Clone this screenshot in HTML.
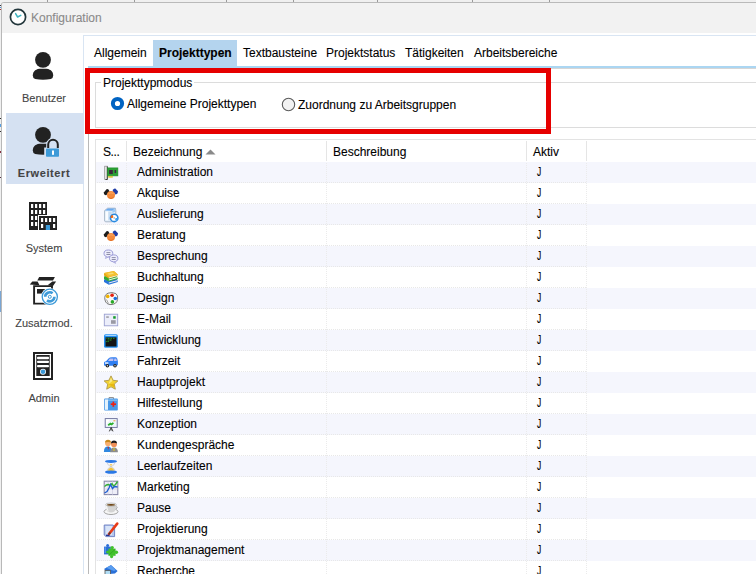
<!DOCTYPE html>
<html><head><meta charset="utf-8">
<style>
*{margin:0;padding:0;box-sizing:border-box}
html,body{width:756px;height:574px;overflow:hidden;background:#f0f0f0;font-family:"Liberation Sans",sans-serif;font-size:12px;color:#000}
.a,.cell,.j{-webkit-text-stroke:0.1px currentColor}
.a{position:absolute;white-space:nowrap}
.t12{font-size:12px;line-height:14px}
.t11{font-size:11px;line-height:13px}
#win{position:absolute;left:1px;top:2px;width:800px;height:600px;background:#fff;border-left:1px solid #b8b8b8;border-top:1px solid #bababa;border-top-left-radius:3px;overflow:hidden}
#title{position:absolute;left:0;top:0;width:800px;height:30px;background:#f2f2f2}
.lbl{color:#444;text-align:center;width:80px;left:4px}
.row{position:absolute;left:96px;width:700px;height:21px}
.row.odd{background:#f5f6fd}
.dot{position:absolute;left:96px;width:491px;height:1px;background-image:linear-gradient(to right,transparent 50%,#e8e8e8 50%);background-size:2px 1px}
.vdot{position:absolute;width:1px;top:162px;height:420px;background-image:linear-gradient(to bottom,transparent 50%,#ebebeb 50%);background-size:1px 2px}
.hsep{position:absolute;top:141px;width:1px;height:20px;background:#e5e5e5}
.cell{position:absolute;left:137px;font-size:12px;line-height:14px;white-space:nowrap}
.j{position:absolute;left:537px;font-size:12px;line-height:14px;transform:scaleX(0.7);transform-origin:0 0;-webkit-text-stroke:0.15px #000}
.ic{position:absolute;left:103px;width:16px;height:16px}
</style></head><body>
<!-- background window bits -->
<div class="a" style="left:47px;top:0;width:1px;height:2px;background:#9a9a9a"></div>
<div class="a" style="left:134px;top:0;width:1px;height:2px;background:#9a9a9a"></div>
<div class="a" style="left:226px;top:0;width:1px;height:2px;background:#9a9a9a"></div>
<div class="a" style="left:293px;top:0;width:1px;height:2px;background:#9a9a9a"></div>
<div class="a" style="left:377px;top:0;width:1px;height:2px;background:#9a9a9a"></div>
<div class="a" style="left:472px;top:0;width:1px;height:2px;background:#9a9a9a"></div>
<div class="a" style="left:549px;top:0;width:1px;height:2px;background:#9a9a9a"></div>

<div class="a" style="left:0;top:291px;width:1px;height:21px;background:#7aa6d4"></div>
<div class="a" style="left:0;top:5px;width:2px;height:1px;background:#334"></div>
<div class="a" style="left:0;top:7px;width:2px;height:1px;background:#4a90d0"></div>
<div class="a" style="left:0;top:9px;width:2px;height:1px;background:#a33"></div>
<div class="a" style="left:0;top:118px;width:1px;height:1px;background:#333"></div>
<div class="a" style="left:0;top:124px;width:1px;height:3px;background:#5aa0e0"></div>
<div class="a" style="left:0;top:131px;width:1px;height:1px;background:#333"></div>
<div class="a" style="left:0;top:151px;width:1px;height:2px;background:#834"></div>
<div class="a" style="left:0;top:177px;width:1px;height:1px;background:#534"></div>
<div id="win">
 <div id="title"></div>
</div>

<!-- title -->
<svg class="a" style="left:9px;top:8px" width="18" height="18" viewBox="0 0 18 18">
 <circle cx="9" cy="9" r="7.6" fill="#fff" stroke="#22363b" stroke-width="1.7"/>
 <path d="M6.6 5.6 L8.6 9 L11.8 7.4" fill="none" stroke="#3fb3c0" stroke-width="1.5" stroke-linecap="round" stroke-linejoin="round"/>
</svg>
<div class="a t12" style="left:31px;top:11px;color:#8a8a8a">Konfiguration</div>

<!-- sidebar -->
<div class="a" style="left:83px;top:35px;width:700px;height:600px;border-left:1px solid #d9e5f3;border-top:1px solid #d9e5f3"></div>

<div class="a" style="left:6px;top:113px;width:78px;height:71px;background:#d5e1f2"></div>
<!-- Benutzer icon -->
<svg class="a" style="left:31px;top:50px" width="24" height="32" viewBox="0 0 24 32">
 <circle cx="12" cy="9.8" r="7.9" fill="#222"/>
 <path d="M8.5 18.7 H15.5 C20.5 19.3 22.2 22.5 22.2 25.5 Q22.2 28.3 19.8 29 Q12 30.6 4.2 29 Q1.8 28.3 1.8 25.5 C1.8 22.5 3.5 19.3 8.5 18.7 Z" fill="#222"/>
</svg>
<div class="a t11 lbl" style="top:92px">Benutzer</div>

<!-- Erweitert icon -->
<svg class="a" style="left:31px;top:125px" width="32" height="34" viewBox="0 0 32 34">
 <circle cx="12" cy="9.8" r="7.9" fill="#222"/>
 <path d="M8.5 18.7 H15.5 C20.5 19.3 22.2 22.5 22.2 25.5 Q22.2 28.3 19.8 29 Q12 30.6 4.2 29 Q1.8 28.3 1.8 25.5 C1.8 22.5 3.5 19.3 8.5 18.7 Z" fill="#222"/>
 <path d="M13.2 32.8 V22.5 H29 V32.8 Z" fill="#d5e1f2"/>
 <path d="M15.2 23.5 V19.5 A6.8 6.8 0 0 1 28.8 19.5 V23.5 Z" fill="#d5e1f2"/>
 <path d="M17.2 23 V19.5 A4.8 4.8 0 0 1 26.8 19.5 V23" fill="none" stroke="#222" stroke-width="2"/>
 <rect x="15" y="23.5" width="13" height="8.3" rx="0.8" fill="#3d9ad8"/>
 <rect x="21" y="25.5" width="2" height="4.3" fill="#fff"/>
</svg>
<div class="a t11 lbl" style="top:167px;font-weight:bold;letter-spacing:0.6px">Erweitert</div>

<!-- System icon -->
<svg class="a" style="left:29px;top:202px" width="28" height="28" viewBox="0 0 28 28">
 <rect x="0" y="0" width="18" height="28" fill="#222"/>
 <g fill="#fff">
  <rect x="2" y="2" width="2.2" height="4"/><rect x="6" y="2" width="2.2" height="4"/><rect x="10" y="2" width="2.2" height="4"/><rect x="14" y="2" width="2.2" height="4"/>
  <rect x="2" y="8" width="2.2" height="4"/><rect x="6" y="8" width="2.2" height="4"/><rect x="10" y="8" width="2.2" height="4"/><rect x="14" y="8" width="2.2" height="4"/>
  <rect x="2" y="14" width="2.2" height="4"/><rect x="6" y="14" width="2.2" height="4"/>
  <rect x="2" y="20" width="2.2" height="4"/><rect x="6" y="20" width="2.2" height="4"/>
  <rect x="9" y="13" width="20" height="15"/>
 </g>
 <rect x="10" y="14" width="18" height="14" fill="#222"/>
 <g fill="#fff">
  <rect x="12" y="16" width="2.2" height="4"/><rect x="16" y="16" width="2.2" height="4"/><rect x="20" y="16" width="2.2" height="4"/><rect x="24" y="16" width="2.2" height="4"/>
  <rect x="12" y="22" width="2.2" height="4"/><rect x="24" y="22" width="2.2" height="4"/>
 </g>
 <rect x="16.8" y="23" width="4.2" height="5" fill="#3d9ad8"/>
</svg>
<div class="a t11 lbl" style="top:242px">System</div>

<!-- Zusatzmod icon -->
<svg class="a" style="left:29px;top:275px" width="30" height="32" viewBox="0 0 30 32">
 <path d="M10.2 2 H25.9 L24 5.5 H8.3 Z" fill="#222"/>
 <path d="M0.8 9.6 L3.3 6.4 H8.6 L10.5 10.2 Z" fill="#222"/>
 <path d="M18.6 10.2 L23.3 6.4 H27.1 L24 11.1 Z" fill="#222"/>
 <path d="M5.1 11.1 H23 V28.6 H5.1 Z" fill="none" stroke="#222" stroke-width="1.9"/>
 <rect x="8" y="14" width="7.8" height="4.6" fill="#222"/>
 <circle cx="20.8" cy="21.8" r="8.9" fill="#fff"/>
 <circle cx="20.8" cy="21.8" r="7.6" fill="none" stroke="#3d9ad8" stroke-width="1.3"/>
 <path d="M16.2 21.8 A4.6 4.6 0 0 1 23.6 18.2" fill="none" stroke="#3d9ad8" stroke-width="2.6"/>
 <path d="M25.4 21.8 A4.6 4.6 0 0 1 18 25.4" fill="none" stroke="#3d9ad8" stroke-width="2.6"/>
 <circle cx="20.8" cy="21.8" r="1.5" fill="none" stroke="#3d9ad8" stroke-width="1"/>
</svg>
<div class="a t11 lbl" style="top:317px">Zusatzmod.</div>

<!-- Admin icon -->
<svg class="a" style="left:33px;top:352px" width="20" height="28" viewBox="0 0 20 28">
 <rect x="0" y="0" width="20" height="28" fill="#222"/>
 <rect x="2" y="2" width="16" height="24" fill="#fff"/>
 <rect x="3.3" y="3" width="13.4" height="21" fill="#222"/>
 <rect x="4" y="4.8" width="12" height="2.4" rx="1" fill="#fff"/>
 <rect x="4" y="8.7" width="12" height="2.4" rx="1" fill="#fff"/>
 <rect x="4" y="12.9" width="12" height="2.4" rx="1" fill="#fff"/>
 <circle cx="10" cy="19.7" r="3" fill="#fff"/>
 <circle cx="10" cy="19.7" r="2.3" fill="#3d9ad8"/>
</svg>
<div class="a t11 lbl" style="top:392px">Admin</div>

<!-- tab control -->
<div class="a" style="left:153px;top:40px;width:84px;height:27px;background:#b4d4ee"></div>
<div class="a" style="left:88px;top:66px;width:700px;height:2px;background:#abd6f2"></div>
<div class="a" style="left:88px;top:68px;width:700px;height:1px;background:#d6d6d6"></div>
<div class="a" style="left:88px;top:68px;width:1px;height:600px;background:#b9b9b9"></div>
<div class="a t12" style="left:94px;top:46px">Allgemein</div>
<div class="a t12" style="left:159px;top:46px;font-weight:bold">Projekttypen</div>
<div class="a t12" style="left:243px;top:46px">Textbausteine</div>
<div class="a t12" style="left:326px;top:46px">Projektstatus</div>
<div class="a t12" style="left:405px;top:46px">Tätigkeiten</div>
<div class="a t12" style="left:474px;top:46px">Arbeitsbereiche</div>

<!-- group box -->
<div class="a" style="left:95px;top:82px;width:700px;height:46px;border-left:1px solid #dcdcdc;border-top:1px solid #dcdcdc;border-bottom:1px solid #dcdcdc"></div>
<div class="a t12" style="left:101px;top:76px;background:#fff;padding:0 2px">Projekttypmodus</div>
<svg class="a" style="left:110px;top:96px" width="15" height="15" viewBox="0 0 15 15">
 <circle cx="7.5" cy="7.5" r="4.6" fill="none" stroke="#0063c2" stroke-width="4"/>
</svg>
<div class="a t12" style="left:127px;top:97px">Allgemeine Projekttypen</div>
<svg class="a" style="left:281px;top:97px" width="15" height="15" viewBox="0 0 15 15">
 <circle cx="7.5" cy="7.5" r="6.2" fill="#f2f2f2" stroke="#5a5a5a" stroke-width="1.1"/>
</svg>
<div class="a t12" style="left:298px;top:98px">Zuordnung zu Arbeitsgruppen</div>

<!-- red annotation -->
<div class="a" style="left:85px;top:68px;width:466px;height:66px;border:5px solid #e60000"></div>

<!-- grid -->
<div class="a" style="left:95px;top:139px;width:700px;height:500px;border-left:1px solid #e3e3e3;border-top:1px solid #e3e3e3"></div>
<div class="hsep" style="left:126px"></div>
<div class="hsep" style="left:326px"></div>
<div class="hsep" style="left:526px"></div>
<div class="hsep" style="left:586px"></div>
<div class="a t12" style="left:103px;top:145px;letter-spacing:-0.4px">S...</div>
<div class="a t12" style="left:133px;top:145px">Bezeichnung</div>
<svg class="a" style="left:205px;top:149px" width="11" height="6" viewBox="0 0 11 6"><path d="M0.5 5.5 L5.5 0.5 L10.5 5.5 Z" fill="#8a8a8a"/></svg>
<div class="a t12" style="left:333px;top:145px">Beschreibung</div>
<div class="a t12" style="left:533px;top:145px">Aktiv</div>

<div id="rows"><div class="row odd" style="top:162px"></div>
<div class="row" style="top:183px"></div>
<div class="row odd" style="top:204px"></div>
<div class="row" style="top:225px"></div>
<div class="row odd" style="top:246px"></div>
<div class="row" style="top:267px"></div>
<div class="row odd" style="top:288px"></div>
<div class="row" style="top:309px"></div>
<div class="row odd" style="top:330px"></div>
<div class="row" style="top:351px"></div>
<div class="row odd" style="top:372px"></div>
<div class="row" style="top:393px"></div>
<div class="row odd" style="top:414px"></div>
<div class="row" style="top:435px"></div>
<div class="row odd" style="top:456px"></div>
<div class="row" style="top:477px"></div>
<div class="row odd" style="top:498px"></div>
<div class="row" style="top:519px"></div>
<div class="row odd" style="top:540px"></div>
<div class="row" style="top:561px"></div>
<div class="dot" style="top:182px"></div>
<div class="dot" style="top:203px"></div>
<div class="dot" style="top:224px"></div>
<div class="dot" style="top:245px"></div>
<div class="dot" style="top:266px"></div>
<div class="dot" style="top:287px"></div>
<div class="dot" style="top:308px"></div>
<div class="dot" style="top:329px"></div>
<div class="dot" style="top:350px"></div>
<div class="dot" style="top:371px"></div>
<div class="dot" style="top:392px"></div>
<div class="dot" style="top:413px"></div>
<div class="dot" style="top:434px"></div>
<div class="dot" style="top:455px"></div>
<div class="dot" style="top:476px"></div>
<div class="dot" style="top:497px"></div>
<div class="dot" style="top:518px"></div>
<div class="dot" style="top:539px"></div>
<div class="dot" style="top:560px"></div>
<div class="dot" style="top:581px"></div>
<div class="vdot" style="left:126px"></div>
<div class="vdot" style="left:326px"></div>
<div class="vdot" style="left:526px"></div>
<div class="vdot" style="left:586px"></div>
<svg class="ic" style="top:165px" viewBox="0 0 16 16"><rect x="1.7" y="1.2" width="2.6" height="13.3" fill="#e8e8e8" stroke="#8a8a8a" stroke-width="0.7"/><path d="M4.3 1.5 V14.5 H2.5" stroke="#333" stroke-width="0.9" fill="none"/><rect x="4.6" y="2.9" width="10.3" height="8" fill="#2aa034"/><rect x="4.6" y="2.9" width="10.3" height="8" fill="none" stroke="#1e8a28" stroke-width="0.6"/><rect x="5.2" y="10.9" width="4.6" height="1.8" fill="#d8c83c"/><rect x="6.1" y="5" width="3.7" height="4" fill="#3a2a3a"/><rect x="11.6" y="5" width="1.5" height="3" fill="#3a2a3a"/></svg>
<div class="cell" style="top:165px">Administration</div>
<div class="j" style="top:165px">J</div>
<svg class="ic" style="top:186px" viewBox="0 0 16 16"><path d="M0.8 6.5 L3.5 3.2 Q4.6 2.6 5.5 3.6 L6.6 5.5 L3.2 9.2 Q1.8 9.2 1 8 Z" fill="#1c1c1c"/><path d="M15 5.2 L12.3 2.6 Q11.2 2.4 10.5 3.3 L9.5 5 L12.6 8.4 Q13.8 8.5 14.6 7.3 Z" fill="#1f3ca6"/><circle cx="8" cy="9" r="4" fill="#f58a3c"/><path d="M4.6 10.2 Q8 13.8 11.4 10.2 Q10 12.6 8 12.9 Q6 12.6 4.6 10.2Z" fill="#e06a22"/><path d="M5.5 7.5 Q8 6 10.5 7.5" stroke="#f9b070" stroke-width="0.8" fill="none"/></svg>
<div class="cell" style="top:186px">Akquise</div>
<div class="j" style="top:186px">J</div>
<svg class="ic" style="top:207px" viewBox="0 0 16 16"><path d="M1.6 3.6 L4.6 1.2 H12.4 L12.8 3.6 V13.6 L9 14.8 H2.4 L1.6 14 Z" fill="#e2eefa" stroke="#98a8bc" stroke-width="0.8"/><path d="M2 3.4 L4.8 1.4 H12 L9.4 3.8 Z" fill="#6aaaf0"/><path d="M9.4 3.8 L12.4 1.6 V4.5 L9.4 6 Z" fill="#9ac8f4"/><rect x="2.6" y="4.6" width="2.4" height="8.6" fill="#fafcff"/><rect x="5.4" y="4.6" width="3.4" height="8.6" fill="#c6dcf2"/><circle cx="11.2" cy="10.9" r="3.7" fill="#fff" stroke="#2a8ae0" stroke-width="1.6"/><path d="M7.5 10.9 A3.7 3.7 0 0 1 9.3 7.7 L10.4 9.6 Q9.8 10.1 9.8 10.9 Z" fill="#f06818"/><path d="M14.9 10.9 A3.7 3.7 0 0 1 13 14.1 L12 12.2 Q12.6 11.7 12.6 10.9 Z" fill="#3aa0f0"/><circle cx="11.2" cy="10.9" r="0.9" fill="#bbb"/></svg>
<div class="cell" style="top:207px">Auslieferung</div>
<div class="j" style="top:207px">J</div>
<svg class="ic" style="top:228px" viewBox="0 0 16 16"><path d="M0.8 6.5 L3.5 3.2 Q4.6 2.6 5.5 3.6 L6.6 5.5 L3.2 9.2 Q1.8 9.2 1 8 Z" fill="#1c1c1c"/><path d="M15 5.2 L12.3 2.6 Q11.2 2.4 10.5 3.3 L9.5 5 L12.6 8.4 Q13.8 8.5 14.6 7.3 Z" fill="#1f3ca6"/><circle cx="8" cy="9" r="4" fill="#f58a3c"/><path d="M4.6 10.2 Q8 13.8 11.4 10.2 Q10 12.6 8 12.9 Q6 12.6 4.6 10.2Z" fill="#e06a22"/><path d="M5.5 7.5 Q8 6 10.5 7.5" stroke="#f9b070" stroke-width="0.8" fill="none"/></svg>
<div class="cell" style="top:228px">Beratung</div>
<div class="j" style="top:228px">J</div>
<svg class="ic" style="top:249px" viewBox="0 0 16 16"><ellipse cx="5.4" cy="4.4" rx="4.4" ry="3.4" fill="#eeeefc" stroke="#9a9ad6" stroke-width="1"/><path d="M3.6 7.2 L2.4 9.4 L6 7.8" fill="#eeeefc" stroke="#9a9ad6" stroke-width="0.8"/><rect x="3.4" y="3.2" width="4" height="0.9" fill="#8080a0"/><rect x="3.4" y="5" width="4" height="0.9" fill="#8080a0"/><ellipse cx="10.7" cy="9.3" rx="4.2" ry="3.4" fill="#eeeefc" stroke="#9a9ad6" stroke-width="1"/><path d="M11.5 12.3 L12.6 14.3 L9.6 12.6" fill="#eeeefc" stroke="#9a9ad6" stroke-width="0.8"/><rect x="8.7" y="8.2" width="4" height="0.9" fill="#8080a0"/><rect x="8.7" y="10" width="4" height="0.9" fill="#8080a0"/></svg>
<div class="cell" style="top:249px">Besprechung</div>
<div class="j" style="top:249px">J</div>
<svg class="ic" style="top:270px" viewBox="0 0 16 16"><path d="M1 9.5 L10.5 6.8 L14.8 10 V12 L5.8 14.8 L1 12 Z" fill="#2874dc"/><path d="M5.8 12.6 L14.6 10.1 V10.9 L5.8 13.4 Z" fill="#f2f2f2"/><path d="M1 6.5 L10.5 3.8 L14.8 7.2 V9 L5.8 11.6 L1 9 Z" fill="#34ac34"/><path d="M5.8 9.6 L14.6 7.1 V7.9 L5.8 10.4 Z" fill="#f2f2f2"/><path d="M1 3.2 L10.9 0.9 L14.9 4.5 V6 L5.8 8.6 L1 5.6 Z" fill="#e8a818"/><path d="M1.4 2.8 L10.9 0.9 L14.9 4.5 L5.8 7.2 Z" fill="#f4c030"/><path d="M4.5 3.5 L9.5 2.5 L11 3.8 L6 4.8 Z" fill="#f8dc70"/><path d="M5.8 7.6 L14.8 5 V5.8 L5.8 8.4 Z" fill="#f2f2f2"/></svg>
<div class="cell" style="top:270px">Buchhaltung</div>
<div class="j" style="top:270px">J</div>
<svg class="ic" style="top:291px" viewBox="0 0 16 16"><path d="M2 9 Q0.8 4 5 2.2 Q9 0.8 12.8 2.6 Q15.4 4.4 14.6 8.4 Q13.6 13.4 8 13.6 Q3 13.6 2 9 Z" fill="#f8f8f8" stroke="#7a7a7a" stroke-width="1"/><circle cx="4.7" cy="5.4" r="1.8" fill="#eeb000"/><circle cx="9.1" cy="4.2" r="1.8" fill="#e62010"/><circle cx="12.3" cy="7.5" r="1.8" fill="#1a6fe0"/><circle cx="9.4" cy="10.9" r="1.8" fill="#28a828"/><path d="M3.5 8.5 L5.5 12.5" stroke="#999" stroke-width="0.9"/></svg>
<div class="cell" style="top:291px">Design</div>
<div class="j" style="top:291px">J</div>
<svg class="ic" style="top:312px" viewBox="0 0 16 16"><rect x="1.3" y="2.2" width="13.4" height="11.6" fill="#eceefa" stroke="#9aa0d0" stroke-width="0.9"/><rect x="3.2" y="4.2" width="2.6" height="1.8" fill="#a8a8b0"/><rect x="10.2" y="4.2" width="2.5" height="2.5" fill="#149a2a"/><rect x="8" y="8.2" width="4.7" height="3.6" fill="#9a9aa4"/></svg>
<div class="cell" style="top:312px">E-Mail</div>
<div class="j" style="top:312px">J</div>
<svg class="ic" style="top:333px" viewBox="0 0 16 16"><rect x="1" y="1.2" width="13.8" height="13.6" rx="1.6" fill="#2290f2"/><rect x="2.4" y="2" width="11" height="1" fill="#a8d4fb"/><rect x="2.5" y="4.3" width="11" height="9.2" fill="#141414"/><path d="M3.2 5.3 H3.8 M4.6 5.3 H6.5 M7.5 5.3 H9 M10 5.3 H11.5 M4.6 7 H5.8 M6.5 7 H8.5 M3.2 8.6 H4.5 M5.2 8.6 H6" stroke="#30c030" stroke-width="0.8"/></svg>
<div class="cell" style="top:333px">Entwicklung</div>
<div class="j" style="top:333px">J</div>
<svg class="ic" style="top:354px" viewBox="0 0 16 16"><path d="M1 11.2 V8.6 Q1.2 7.6 3 7.2 L5.5 4.4 Q6.5 3.2 9 3.2 H12.5 Q13.5 3.2 14.2 4.4 L14.9 7.5 V10.8 Q14.5 11.8 13 11.8 H3 Q1.3 11.8 1 11.2 Z" fill="#2f7ff2"/><path d="M5 7 L6.8 4.6 H10.5 L10.2 7 Z" fill="#c0c0f0"/><path d="M11 7 L11.4 4.6 H13.3 L13.8 7 Z" fill="#c0c0f0"/><rect x="2" y="8.4" width="3.4" height="1.3" fill="#fff"/><circle cx="4.4" cy="11.8" r="1.8" fill="#222"/><circle cx="12" cy="11.8" r="1.8" fill="#222"/><circle cx="4.4" cy="11.8" r="0.7" fill="#ddd"/><circle cx="12" cy="11.8" r="0.7" fill="#ddd"/></svg>
<div class="cell" style="top:354px">Fahrzeit</div>
<div class="j" style="top:354px">J</div>
<svg class="ic" style="top:375px" viewBox="0 0 16 16"><path d="M8 0.9 L10.1 5.3 L14.9 5.9 L11.3 9.1 L12.3 14.2 L8 11.8 L3.7 14.2 L4.7 9.1 L1.1 5.9 L5.9 5.3 Z" fill="#f2d230" stroke="#b09a48" stroke-width="0.9" stroke-linejoin="round"/><path d="M8 2.5 L9.4 5.9 L5.6 9 Z" fill="#f8e888"/><path d="M5.6 9.6 L11 8.5 L11.5 12.5 Z" fill="#e8b810"/></svg>
<div class="cell" style="top:375px">Hauptprojekt</div>
<div class="j" style="top:375px">J</div>
<svg class="ic" style="top:396px" viewBox="0 0 16 16"><path d="M6 3 V1.6 H10.5 V3" fill="none" stroke="#8a8a8a" stroke-width="1"/><path d="M1.2 3.4 Q1.2 2.6 2 2.6 H14 Q14.8 2.6 14.8 3.4 V13.8 Q14.8 14.6 14 14.6 H2 Q1.2 14.6 1.2 13.8 Z" fill="#4898e8"/><rect x="2" y="3.4" width="3" height="10.4" fill="#e4f2fc"/><rect x="5" y="3.4" width="9" height="1.6" fill="#7ab8f0"/><rect x="9.5" y="5.6" width="1.7" height="5.2" fill="#f02010"/><rect x="7.75" y="7.35" width="5.2" height="1.7" fill="#f02010"/></svg>
<div class="cell" style="top:396px">Hilfestellung</div>
<div class="j" style="top:396px">J</div>
<svg class="ic" style="top:417px" viewBox="0 0 16 16"><rect x="2.2" y="1.6" width="12" height="8.8" fill="#eef6fb" stroke="#6a6e9a" stroke-width="0.9"/><path d="M3 2.4 L7 2.4 L3 8 Z" fill="#ffffff"/><path d="M5.2 8.2 L7.4 6.6 L8.6 7.4 L10.4 5.8" stroke="#2cb02c" stroke-width="1.8" fill="none"/><rect x="10.4" y="3.3" width="2" height="1" fill="#f0a040"/><path d="M8.2 10.5 L6.3 14.4 M8.2 10.5 L10 14.4 M8.2 10.5 V13.6" stroke="#444" stroke-width="1"/></svg>
<div class="cell" style="top:417px">Konzeption</div>
<div class="j" style="top:417px">J</div>
<svg class="ic" style="top:438px" viewBox="0 0 16 16"><circle cx="5" cy="5.2" r="2.9" fill="#f8b070"/><path d="M2 4.6 Q2.2 1.8 5 1.8 Q7.8 1.8 8 4.6 Q5 3.2 2 4.6 Z" fill="#c88a20"/><path d="M0.9 14 Q0.9 8.6 5 8.6 Q8.6 8.6 8.8 14 Z" fill="#3088e0"/><path d="M4.5 8.8 L5.2 12 L5.9 8.8 Z" fill="#d02020"/><circle cx="11" cy="6.2" r="2.9" fill="#f09058"/><path d="M8 5.6 Q8 2.6 11 2.6 Q14 2.6 14 5.6 Q11 4 8 5.6 Z" fill="#1c1c1c"/><path d="M7.2 14.2 Q7.2 9.6 11 9.6 Q14.8 9.6 14.9 14.2 Z" fill="#8c8c8c"/><path d="M11 9.8 V13" stroke="#e8c818" stroke-width="1"/></svg>
<div class="cell" style="top:438px">Kundengespräche</div>
<div class="j" style="top:438px">J</div>
<svg class="ic" style="top:459px" viewBox="0 0 16 16"><ellipse cx="8" cy="2.4" rx="6" ry="1.5" fill="#2a78e6"/><ellipse cx="8" cy="12.9" rx="6" ry="1.8" fill="#2a78e6"/><path d="M4.2 3.6 Q4.2 6 8 7.8 Q11.8 6 11.8 3.6 M4.2 11.4 Q4.2 9.4 8 7.8 Q11.8 9.4 11.8 11.4" stroke="#b8b8b8" stroke-width="0.6" fill="none"/><path d="M6.5 5.2 H9.5 L8 7 Z" fill="#f0c040"/><path d="M8 8.5 Q11 9.5 11.3 11.4 H4.7 Q5 9.5 8 8.5 Z" fill="#f2c23a"/></svg>
<div class="cell" style="top:459px">Leerlaufzeiten</div>
<div class="j" style="top:459px">J</div>
<svg class="ic" style="top:480px" viewBox="0 0 16 16"><rect x="1.2" y="1.2" width="13.6" height="13.4" fill="#eeeef8" stroke="#8888a8" stroke-width="1.1"/><path d="M1 5 H15 M1 9 H15 M5 1 V15 M9.5 1 V15" stroke="#c8c8dc" stroke-width="0.6"/><path d="M1.5 6.5 L3.5 5 L5.5 4.6 L7 5.5 L9 3.6 L10.5 6 L12.5 4.5 L14.5 1.5" stroke="#34b034" stroke-width="1.4" fill="none"/><path d="M1.5 13 L4 11.6 L6 8 L7.5 4.5 L9.5 8.5 L11.5 6.5 L14.5 7" stroke="#2060d0" stroke-width="1.4" fill="none"/></svg>
<div class="cell" style="top:480px">Marketing</div>
<div class="j" style="top:480px">J</div>
<svg class="ic" style="top:501px" viewBox="0 0 16 16"><ellipse cx="8" cy="10.6" rx="7" ry="2.9" fill="#f6f6f6" stroke="#9a9a9a" stroke-width="0.9"/><path d="M2.6 3.6 Q2.4 11.6 8 11.6 Q13.6 11.6 13.4 3.6 Z" fill="#d4d4d4"/><path d="M2.6 3.6 Q2.6 9 6 11 Q4 7 4.5 3.6 Z" fill="#f4f4f4"/><ellipse cx="8" cy="3.6" rx="5.4" ry="1.6" fill="#eeeeee" stroke="#a0a0a0" stroke-width="0.6"/><ellipse cx="8" cy="3.8" rx="4" ry="0.9" fill="#6a4010"/><path d="M13.2 5 Q15.4 5.5 13.2 8" stroke="#999" stroke-width="0.8" fill="none"/></svg>
<div class="cell" style="top:501px">Pause</div>
<div class="j" style="top:501px">J</div>
<svg class="ic" style="top:522px" viewBox="0 0 16 16"><path d="M1.2 3 H10 L11.6 4.5 V14.6 H3 L1.2 13 Z" fill="#b4c8ee" stroke="#6a7cc0" stroke-width="0.9"/><path d="M2.5 4 H9 V13 H3Z" fill="#d8e4f8"/><path d="M6 12 L14.2 1.6" stroke="#e83a18" stroke-width="2.6" stroke-linecap="round"/><path d="M6 12 L7.2 10.5" stroke="#404040" stroke-width="1.6"/><path d="M3 13.3 H6.5" stroke="#1a2a88" stroke-width="1.3"/></svg>
<div class="cell" style="top:522px">Projektierung</div>
<div class="j" style="top:522px">J</div>
<svg class="ic" style="top:543px" viewBox="0 0 16 16"><rect x="1" y="3.6" width="6.8" height="7.8" fill="#2a6cd6"/><circle cx="4.6" cy="2.6" r="1.5" fill="#2a6cd6"/><rect x="1.6" y="4.2" width="1.2" height="6" fill="#5a9af0"/><rect x="5.4" y="5.6" width="7.2" height="7.2" fill="#40c02c"/><circle cx="9.2" cy="4.6" r="1.7" fill="#40c02c"/><circle cx="13.4" cy="9.2" r="1.7" fill="#40c02c"/><circle cx="8.6" cy="13.6" r="1.6" fill="#40c02c"/><circle cx="4.6" cy="9" r="1.5" fill="#40c02c"/><path d="M6 11.8 L12 6.5" stroke="#2a9a20" stroke-width="0.6"/></svg>
<div class="cell" style="top:543px">Projektmanagement</div>
<div class="j" style="top:543px">J</div>
<svg class="ic" style="top:564px" viewBox="0 0 16 16"><path d="M1 5 L8 1 L14.6 7 L12 9.5 L6 10 Z" fill="#2a70d8"/><path d="M3 3.8 L8 1.4 L13 6 L11 7 Z" fill="#5a9ef0"/><rect x="2" y="6.5" width="5.5" height="6" fill="#b0dcf4" stroke="#555" stroke-width="0.8"/></svg>
<div class="cell" style="top:564px">Recherche</div>
<div class="j" style="top:564px">J</div></div><!--/rows-->
</body></html>
